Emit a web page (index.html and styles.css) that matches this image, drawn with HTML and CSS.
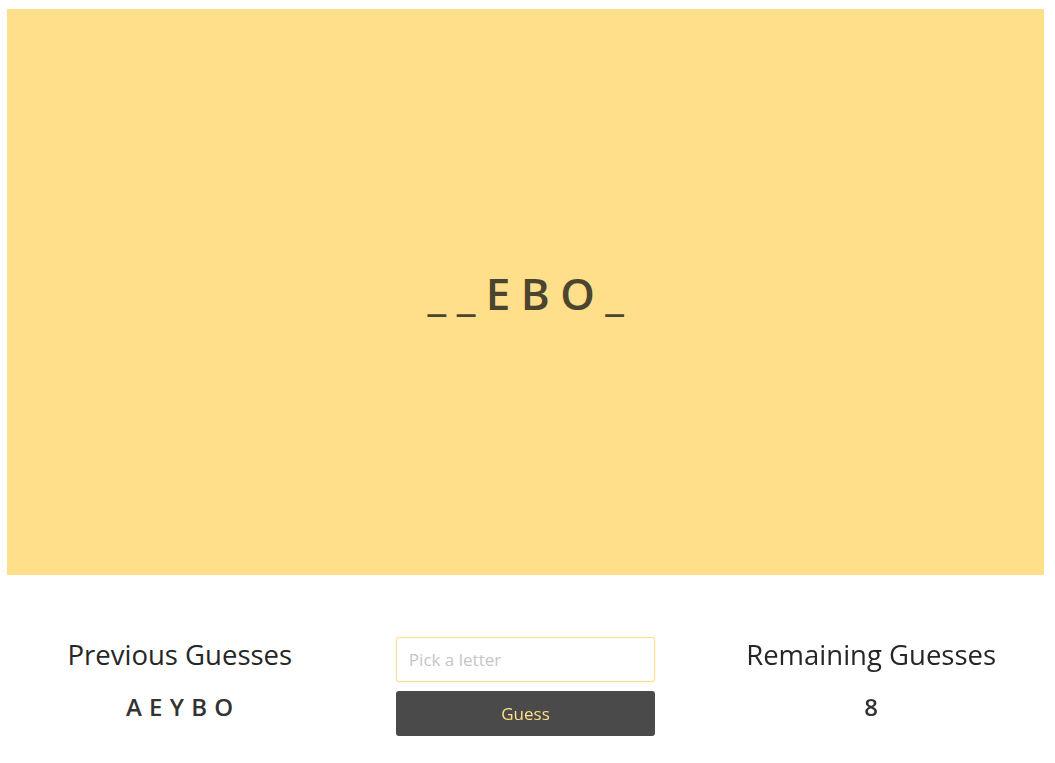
FILE: index.html
```html
<!DOCTYPE html>
<html lang="en">
<head>
<meta charset="utf-8">
<title>Hangman</title>
<link rel="stylesheet" href="styles.css">
</head>
<body>
<div class="page">
  <section class="board">
    <div class="word">_ _ E B O _</div>
  </section>
  <section class="controls">
    <div class="col">
      <h2 class="col-title">Previous Guesses</h2>
      <div class="col-value letters">A E Y B O</div>
    </div>
    <div class="col col-form">
      <input class="letter-input" type="text" placeholder="Pick a letter" autofocus>
      <button class="guess-btn" type="button">Guess</button>
    </div>
    <div class="col">
      <h2 class="col-title">Remaining Guesses</h2>
      <div class="col-value">8</div>
    </div>
  </section>
</div>
</body>
</html>
```

FILE: styles.css
```css
html, body {
  margin: 0;
  padding: 0;
  background: #ffffff;
}
body {
  font-family: "Open Sans", "Noto Sans", sans-serif;
  color: #333333;
}
.page {
  padding: 9px 11px 0 7px;
}
.board {
  height: 566px;
  background: #ffdf89;
  display: flex;
  align-items: center;
  justify-content: center;
}
.word {
  font-size: 44px;
  font-weight: 600;
  letter-spacing: -0.5px;
  color: #4b4530;
  padding-top: 2px;
}
.controls {
  display: grid;
  grid-template-columns: 1fr 1fr 1fr;
  padding-top: 62px;
}
.col {
  display: flex;
  flex-direction: column;
  align-items: center;
}
.col-title {
  margin: 0;
  font-size: 27.5px;
  font-weight: 400;
  line-height: 36px;
  color: #262626;
}
.col-value {
  margin-top: 19px;
  font-size: 24px;
  font-weight: 600;
  line-height: 30px;
  color: #333333;
}
.letters {
  letter-spacing: 0.5px;
}
.col-form {
  gap: 9px;
}
.letter-input {
  box-sizing: border-box;
  width: 75%;
  height: 45px;
  border: 1px solid #ffdf89;
  border-radius: 3px;
  padding: 0 12px;
  font-family: inherit;
  font-size: 17px;
  color: #333;
  outline: none;
  box-shadow: 0 0 2px rgba(255, 223, 137, 0.6);
}
.letter-input::placeholder {
  color: #c6c6c6;
}
.guess-btn {
  width: 75%;
  height: 45px;
  border: none;
  border-radius: 3px;
  background: #4a4a4a;
  color: #ffdf89;
  font-family: inherit;
  font-size: 17px;
  cursor: pointer;
}
```
